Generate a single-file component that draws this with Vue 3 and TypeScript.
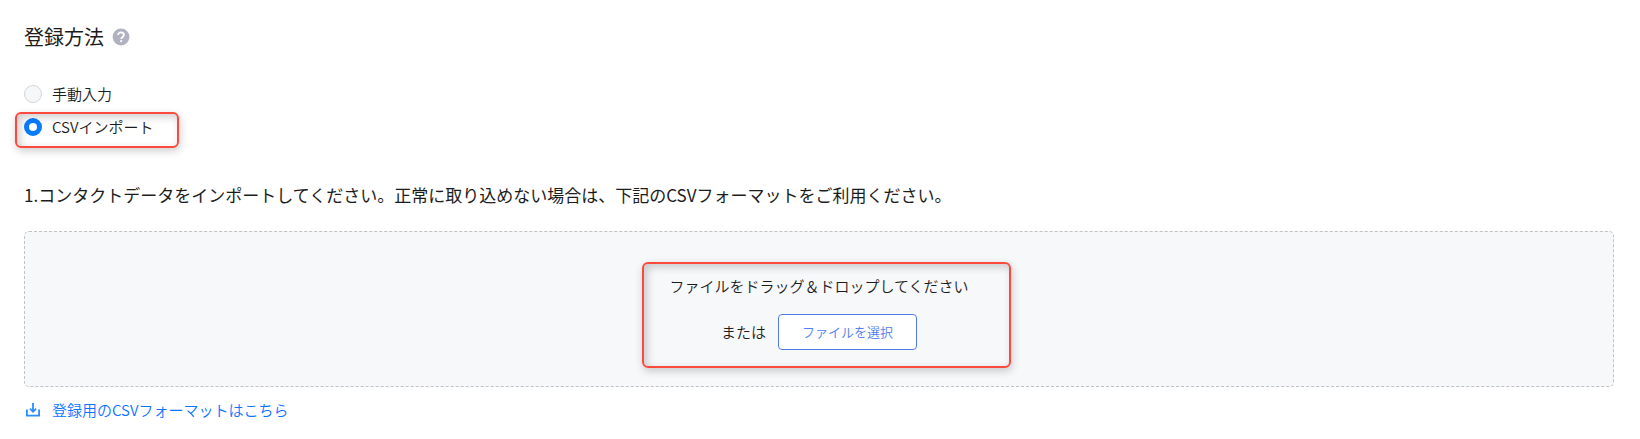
<script setup lang="ts">
import { ref } from 'vue'

type Method = 'manual' | 'csv'

const methods: { value: Method; label: string }[] = [
  { value: 'manual', label: '手動入力' },
  { value: 'csv', label: 'CSVインポート' },
]
const method = ref<Method>('csv')
</script>

<template>
  <main class="page">
    <header class="heading">
      <h1>登録方法</h1>
      <button class="help" type="button" aria-label="ヘルプ">
        <svg width="18" height="18" viewBox="0 0 18 18" aria-hidden="true">
          <circle cx="9" cy="9" r="8.4" fill="#b0b2bf" />
          <path d="M6.1 7.1C6.1 5.4 7.3 4.3 9 4.3s2.9 1.1 2.9 2.7c0 1.9-2.7 2.1-2.7 4.1" fill="none" stroke="#fff" stroke-width="1.8" />
          <rect x="8.2" y="12.2" width="1.9" height="1.9" fill="#fff" />
        </svg>
      </button>
    </header>

    <div class="methods" role="radiogroup" aria-label="登録方法">
      <div v-for="m in methods" :key="m.value" class="method">
        <input :id="m.value" v-model="method" type="radio" name="method" :value="m.value" />
        <label :for="m.value">{{ m.label }}</label>
        <span v-if="m.value === 'csv'" class="mark mark-method"></span>
      </div>
    </div>

    <h2>1.コンタクトデータをインポートしてください。正常に取り込めない場合は、下記のCSVフォーマットをご利用ください。</h2>

    <section class="dropzone">
      <div class="drop-content">
        <p>ファイルをドラッグ＆ドロップしてください</p>
        <div class="choose">
          <span>または</span>
          <button class="select-file" type="button">ファイルを選択</button>
        </div>
        <span class="mark mark-drop"></span>
      </div>
    </section>

    <a class="download" href="#">
      <svg width="18" height="18" viewBox="0 0 18 18" fill="none" stroke="#2b8cff" stroke-width="1.8" aria-hidden="true">
        <path d="M2.9 8.4v6.3h12.2V8.4" stroke-linejoin="round" />
        <path d="M9 2v8.6M5.9 7.7 9 10.8l3.1-3.1" />
      </svg>
      <span>登録用のCSVフォーマットはこちら</span>
    </a>
  </main>
</template>

<style>
body {
  margin: 0;
  background: #fff;
}
</style>

<style scoped>
.page {
  padding: 22px 26px 16px 24px;
  color: #1c1c1c;
  font-family: "Noto Sans CJK JP", "Noto Sans", sans-serif;
  font-size: 15px;
  font-weight: 350;
  line-height: 24px;
}
h1,
h2,
p {
  margin: 0;
}
.heading {
  display: flex;
  align-items: center;
  gap: 8px;
}
h1 {
  font-size: 20px;
  font-weight: 400;
  line-height: 30px;
}
.help {
  display: flex;
  padding: 0;
  border: 0;
  background: none;
}
.methods {
  display: grid;
  gap: 9px;
  margin-top: 30px;
}
.method {
  position: relative;
  display: flex;
  align-items: center;
  gap: 10px;
  width: max-content;
}
.method input {
  appearance: none;
  box-sizing: border-box;
  width: 18px;
  height: 18px;
  margin: 0;
  border: 1px solid #d3d6d9;
  border-radius: 50%;
  background: #f6f7f9;
}
.method input:checked {
  border: 5px solid #087cff;
  background: #fff;
}
.mark {
  position: absolute;
  box-sizing: border-box;
  border: 2px solid #fb493e;
  border-radius: 6px;
  box-shadow: 1px 3px 8px rgba(0, 0, 0, 0.2), inset 3px 3px 8px rgba(0, 0, 0, 0.2);
  pointer-events: none;
}
.mark-method {
  inset: -3px -25px -9px -9px;
}
h2 {
  margin-top: 43px;
  font-size: 17px;
  font-weight: 400;
  line-height: 26px;
}
.dropzone {
  display: flex;
  justify-content: center;
  margin-top: 23px;
  padding: 42px 0 36px;
  border: 1px dashed #c0c2c4;
  border-radius: 5px;
  background: #f7f8fa;
}
.drop-content {
  position: relative;
  display: grid;
  justify-items: center;
  gap: 16px;
}
.choose {
  display: flex;
  align-items: center;
  gap: 12px;
}
.select-file {
  height: 36px;
  padding: 0 23px;
  border: 1px solid #4f7df0;
  border-radius: 4px;
  background: #fff;
  color: #4f7df0;
  font: inherit;
  font-size: 13px;
}
.mark-drop {
  inset: -12px -42px -18px -27px;
}
.download {
  display: flex;
  align-items: center;
  gap: 10px;
  width: max-content;
  margin-top: 11px;
  color: #0a74ff;
  text-decoration: none;
}
</style>
